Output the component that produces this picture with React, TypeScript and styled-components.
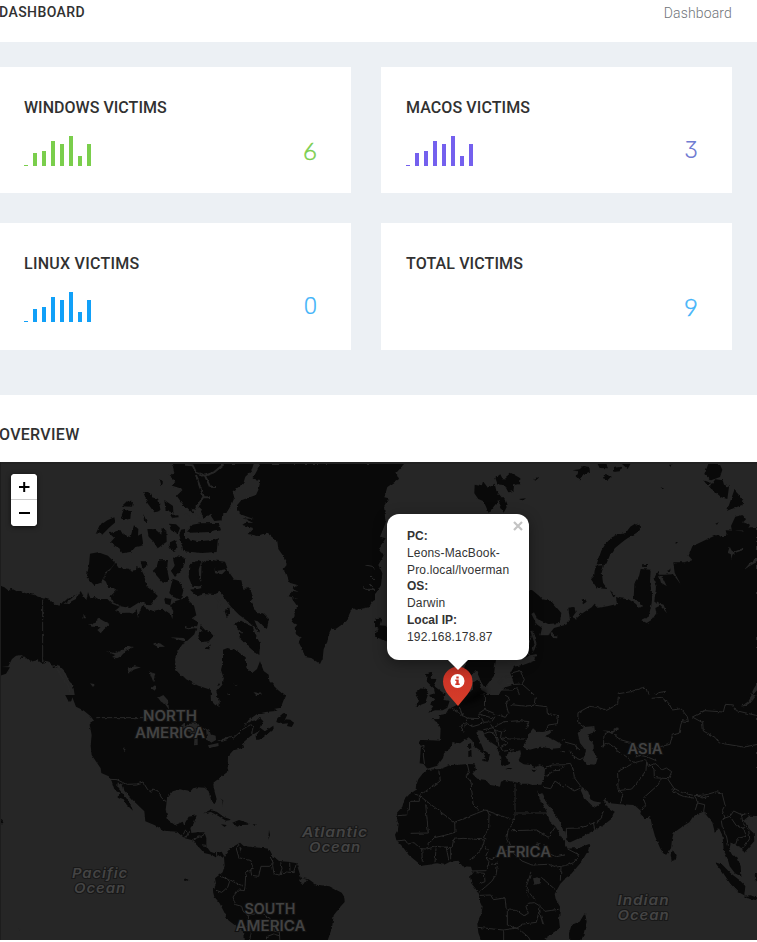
import React from "react";
import styled, { createGlobalStyle } from "styled-components";

const GlobalStyle = createGlobalStyle`
  * { box-sizing: border-box; }
  body { margin: 0; background: #fff; color: #313131; font-family: Roboto, sans-serif; overflow: hidden; }
`;

const Page = styled.div`
  width: 757px;
  height: 942px;
  display: flex;
  flex-direction: column;
  overflow: hidden;
`;

const TopBar = styled.header`
  height: 42px;
  flex: none;
  display: flex;
  justify-content: space-between;
  padding: 3px 25px 0 0;
`;

const PageTitle = styled.h4`
  margin: 0 0 0 -1px;
  font: 500 14px/18px Roboto, sans-serif;
  letter-spacing: 0.43px;
`;

const Breadcrumb = styled.span`
  font: 300 14px/20px Roboto, sans-serif;
  letter-spacing: 0.15px;
  color: #6f7479;
`;

const Stats = styled.section`
  height: 353px;
  flex: none;
  background: #ecf0f4;
  padding: 25px 25px 0 0;
  display: grid;
  grid-template-columns: 351px 351px;
  grid-template-rows: 126px 127px;
  gap: 30px;
`;

const Card = styled.article`
  background: #fff;
  padding: 31px 34px 0 24px;
  &:nth-child(even) { padding-left: 25px; }
`;

const CardTitle = styled.h3<{ $spacing: number }>`
  margin: 0;
  font: 500 16px/20px Roboto, sans-serif;
  letter-spacing: ${(p) => p.$spacing}px;
  white-space: nowrap;
`;

const CardBody = styled.div`
  height: 30px;
  margin-top: 18px;
  display: flex;
  justify-content: space-between;
`;

const Spark = styled.div<{ $color: string }>`
  display: flex;
  align-items: flex-end;
  gap: 5px;
  color: ${(p) => p.$color};
`;

const Bar = styled.i<{ $h: number }>`
  width: 4px;
  height: ${(p) => p.$h}px;
  background: currentColor;
`;

const Value = styled.span<{ $color: string; $font: string; $size: number; $weight: number }>`
  font: 300 ${(p) => p.$size}px/29px ${(p) => p.$font}, sans-serif;
  font-feature-settings: "cv09" 1;
  color: ${(p) => p.$color};
  -webkit-text-stroke: ${(p) => p.$weight}px ${(p) => p.$color};
`;

const Overview = styled.section`
  flex: 1;
  display: flex;
  flex-direction: column;
`;

const OverviewTitle = styled.h3`
  height: 67px;
  margin: 0 0 0 -1px;
  padding-top: 30px;
  font: 500 16px/20px Roboto, sans-serif;
  letter-spacing: 0.3px;
`;

const MapFrame = styled.div`
  position: relative;
  height: 478px;
  background: #262626;
`;

const MapArt = styled.svg`
  display: block;
`;

const ZoomBox = styled.div`
  position: absolute;
  left: 11px;
  top: 12px;
  width: 26px;
  height: 52px;
  border-radius: 4px;
  background: #fff;
  box-shadow: 0 1px 5px rgba(0, 0, 0, 0.65);
  overflow: hidden;
`;

const ZoomButton = styled.button`
  display: flex;
  align-items: center;
  justify-content: center;
  width: 26px;
  height: 26px;
  padding: 0;
  border: 0;
  background: #fff;
  &:first-child { border-bottom: 1px solid #ccc; }
`;

const Popup = styled.div`
  position: absolute;
  left: 387px;
  top: 52px;
  width: 142px;
  height: 146px;
  padding: 14px 15px 0 20px;
  border-radius: 12px;
  background: #fff;
  box-shadow: 0 3px 14px rgba(0, 0, 0, 0.4);
  color: #333;
  font: 12px/16.8px "Liberation Sans", Arial, sans-serif;
  letter-spacing: 0.16px;
  b { letter-spacing: 0; }
`;

const Tip = styled.i`
  position: absolute;
  left: 61px;
  top: 146px;
  border: 10px solid transparent;
  border-top-color: #fff;
  border-bottom: 0;
`;

const Close = styled.svg`
  position: absolute;
  left: 126px;
  top: 7px;
`;

const Pin = styled.svg`
  position: absolute;
  left: 438px;
  top: 202px;
`;

const WATER = "#262626";

type Tile = { x: number; y: number; w: number; h: number; vx?: number; land: string; water?: string; lines?: string; lakes?: string };

const tiles: Tile[] = [
  {
    x: 0, y: 455, w: 185, h: 240,
    land: `M-5,392L12,396L28,409L36,401L50,409L62,408L75,414L100,419L128,429L150,435L162,446L178,452L192,437L205,431L228,418L212,433L190,446L205,446L216,438L228,432L242,408L252,427L259,436L264,412L271,430L284,426L295,432L322,432L336,446L360,455L345,467L362,474L388,473L400,476L410,462L414,490L419,470L427,450L445,464L460,468L488,461L512,478L517,492L520,468L510,452L527,438L570,425V560L552,562L537,582L525,612L528,645L545,664L570,675V725H225L219,690L207,678L194,648L177,631L160,640L148,622L129,626L112,616L92,620L72,604L58,614L67,600L48,602L36,612L25,634L5,636L30,637L18,656L-5,664Z
      M270,296L294,292L324,302L345,324L333,340L318,350L303,383L282,390L260,367L267,330Z
      M346,324L356,339L386,341L396,350L408,348L409,333L422,340L433,363L440,395L468,414L473,424L450,451L420,440L390,459L362,454L336,440L332,423L350,405L341,399L325,399L318,380L309,373L317,357L330,346Z
      M422,319L438,319L439,334L428,343Z M475,316L504,315L501,342L508,376L490,385L458,348L470,336Z M519,312L530,304L560,309L547,343L525,366L513,348L524,332Z
      M518,371L536,378L550,406L543,434L520,426L508,414Z M492,428L514,432L511,451L496,446Z
      M286,240L298,212L322,196L343,187L346,202L327,218L305,241L298,232Z
      M330,264L343,249L328,235L361,225L368,237L391,247L402,211L415,222L414,242L425,236L430,271L406,276L394,290L367,295L358,280Z
      M365,154L382,137L399,142L396,155Z M364,184L371,164L393,169L391,191L374,195Z M430,111L448,111L456,127L475,133L482,168L463,172L442,144Z M493,135L519,153L520,173L497,166Z
      M478,71L489,83L484,94Z M430,178L441,201L432,200Z M511,180L534,178L536,187L516,188Z
      M516,27H570V155L556,158L530,122L550,103L512,91L528,80L509,63L522,50Z
      M442,222L465,223L484,239L485,219L499,227L500,260L473,280L461,260L446,245Z M507,206L528,208L540,219L533,237L512,225Z M510,262L525,255L533,280L519,288L509,278Z M543,224L570,220V292L550,287L538,240Z`,
    lakes: "M263,510L287,503L294,488L312,499L329,507L311,524L302,535L292,525L302,517L280,515Z M317,588L345,594L371,583L382,572L402,576L377,588L363,604L351,610L336,606L346,600Z M383,641L403,634L423,637L401,644L386,656Z M459,568L480,565L495,575L474,576Z M448,650L466,656L460,681Z M250,476L259,490L251,490Z M511,547L550,549L570,562L547,557Z M270,685L286,688L279,696Z M453,700L466,690L465,707Z",
    lines: "M128,431V618L148,622L154,634L173,631L194,656L208,683L220,692 M172,641L185,665L204,690L210,712 M168,635L178,656L190,671",
  },
  {
    x: 185, y: 455, w: 190, h: 240, vx: 15,
    land: `M-5,27H221L214,48L196,65L190,85L169,101L158,109L163,129L155,148L139,174L127,174L125,196L103,198L89,177L72,190L62,176L68,166L51,150L38,175L22,158L-5,163Z
      M242,27H605V425L579,438L566,457L526,465L517,458L507,480L500,498L485,509L468,521L455,522L445,542L442,560L431,582L428,610L420,627L394,609L375,606L370,588L356,562L362,548L348,538L344,518L352,509L335,500L344,483L343,471L352,454L335,430L356,432L326,424L337,407L356,411L338,401L352,390L329,383L319,354L308,345L320,330L312,306L295,282L292,259L260,233L231,243L203,237L220,219L187,210L196,203L220,204L191,190L222,193L188,180L171,166L171,151L184,136L228,120L235,105L242,75L218,71Z
      M20,228L38,209L61,205L116,204L123,226L91,231L28,233Z M-5,248L27,253L54,259L103,255L114,249L110,291L65,294L15,289L3,278Z
      M28,330L54,315L64,319L56,344L58,372L68,389L58,394L36,392L26,367Z M65,324L76,317L102,319L105,355L126,358L141,343L163,374L184,376L190,401L211,400L219,430L211,439L231,475L249,475L267,492L260,522L250,513L238,500L223,496L239,533L205,500L177,479L153,455L131,427L120,410L100,420L72,417L52,424L30,404L67,400L63,370Z
      M100,316L135,320L143,341L121,346L106,349Z M161,510L183,497L201,506L219,518L227,541L240,565L238,600L217,585L197,567L178,549L186,532Z M-5,435L19,426L27,438L42,452L49,481L35,490L55,502L43,538L22,557L-5,563Z
      M55,543L62,511L75,525L103,541L86,559L62,562Z M76,581L93,568L87,583Z M134,468L148,457L151,476L140,486Z M179,530L194,547L181,547Z
      M129,584L143,579L171,589L197,607L199,638L216,655L231,642L240,619L251,648L266,659L268,679L293,704L318,725H114L109,710L127,689L132,672L123,645L129,620Z M-5,666L17,672L55,692L91,704L98,725H-5Z M117,684L120,690L112,693Z`,
    lakes: "M130,724L150,716L155,724Z M220,711L234,715L249,716L232,724Z M158,684L172,689L175,694Z M3,185L20,174L30,190L23,200Z M116,435L122,448L111,463Z",
    lines: "M605,365L577,334L556,330M602,391L570,360M604,403L557,403L549,398M586,409L568,387",
    water: "M0,28L38,31L48,52L74,62L102,52L131,28M48,60L60,96L71,124L58,145L51,160M76,64L90,95L108,96M68,127L90,127M37,160L50,181L65,194M5,513L26,520L45,516L65,528M105,421L123,447",
  },
  {
    x: 375, y: 455, w: 190, h: 240, vx: 15,
    land: `M-5,27H102L79,53L87,72L52,96L43,127L56,130L42,154L47,203L30,245L47,250L27,279L41,301L25,330L37,354L33,390L24,406L0,436Z
      M-3,482L19,492L34,491L29,511L52,513L54,560L24,550L9,534L27,522L-4,507Z M314,89L335,94L339,79L354,99L374,86L379,107L394,126L356,174L341,139L325,132L313,115Z
      M376,69L391,58L399,74L422,53L451,70L450,87L432,91L431,107L415,112L404,91L383,88Z M389,127L404,127L413,151L401,173L388,151Z M447,132L468,130L458,137Z M490,72L509,66L496,77Z
      M460,414L485,404L507,422L517,433L543,438L574,474L569,504L535,507L503,493L492,472L484,477L500,508L516,519L511,541L535,541L552,519L590,509V720H385L400,699L434,688L421,655L432,635L466,628L497,616L486,600L446,614L430,604L449,559L466,523L444,485L432,541L405,594L379,608L374,639L372,662L344,698L334,682L318,644L300,665L279,660L290,602L356,514L407,448Z
      M309,678L328,674L334,705L354,716L328,720H286L300,712L309,701Z M168,658L190,653L180,671L199,672L193,694L228,720H178L195,715L191,699L171,680Z M137,713L157,696L175,703L170,720H140Z`,
    water: "M420,663L400,669L383,685M483,525L497,566L487,592M475,605L500,600M542,533L551,546L562,547",
    lines: "M389,705L427,705L442,698L448,720M407,684L435,688L456,687L463,674L450,647L424,654M456,687L493,720M480,615L472,580L484,542",
  },
  {
    x: 565, y: 455, w: 192, h: 240, vx: 15,
    land: `M-5,502L8,496L17,511L30,495L25,458L43,456L48,471L38,485L45,494L65,476L95,457L104,446L115,458L142,454L171,447L168,426L180,430L205,433L228,447L237,460L247,454L221,430L223,389L236,368L242,342L272,344L270,381L277,421L275,444L266,485L244,496L260,504L276,494L289,475L286,459L300,452L315,468L320,474L311,449L283,440L288,399L281,369L293,347L303,383L320,393L309,370L294,359L314,359L339,358L353,376L363,389L344,353L340,322L372,322L397,315L386,302L397,274L430,258L461,244L475,239L486,248L500,238L497,226L548,229L570,217L600,217V725H-5Z
      M211,215L225,206L239,212L240,221L229,234L200,251L186,262L165,279L151,298L139,326L110,328L124,287L137,266L156,247L173,239L197,234Z
      M107,332L132,331L125,352L129,383L142,402L111,399L93,373L102,363Z M150,406L166,420L161,429Z M64,435L74,430L80,440L69,448Z
      M445,27H479L487,44L480,66L453,76L433,57Z M430,76L453,83L445,94Z M449,97L466,73L488,76L492,89L507,95L502,132L484,127Z M523,105L537,120L550,135L548,149L501,167Z M513,213L526,185L548,180L558,193L549,202L570,209L562,226L516,227Z
      M37,46L59,43L69,33L88,36L90,50L71,57L59,73L50,64L56,49Z M113,27H138L144,40L119,39Z M160,51L164,38L184,35L179,49Z M186,27H211L203,42Z M129,70L132,60L155,63L144,74Z M98,60L106,66M327,29H338L331,35Z M302,97L313,101L306,102Z M250,327L262,327L260,336L249,335Z M322,342L333,345L324,351Z M466,206L476,202L471,209Z M346,264L354,263L350,269Z`,
    lakes: "M509,275L518,292L548,280L550,285L527,293L517,299L515,313L512,297L503,294Z M552,345L570,323L596,307V318L568,334Z M566,735L581,701L600,672V695Z",
    lines: "M172,725L176,716L213,710L247,698L259,702L264,719L281,725L296,713L317,709L308,718L320,735",
  },
  {
    x: 0, y: 695, w: 185, h: 247,
    land: `M193,-5L207,22L214,18L217,7L228,35L250,46L272,64L282,77L269,88L275,120L272,152L275,180L302,220L304,234L326,244L335,258L344,286L358,293L356,307L371,313L380,329L399,347L391,326L374,304L352,276L353,262L369,269L373,287L401,318L433,349L436,379L463,390L494,407L531,410L549,426L570,434V390H552L548,380L525,391L504,374L497,344L501,311L518,289L540,283L570,290V-5Z M2,374L9,379L4,386Z M54,701L61,705L59,708Z M552,551L563,554L553,558Z`,
    lakes: "M474,8L490,0L504,16L507,44L495,27L483,20Z M535,101L554,82L570,81V95L548,102Z M367,155L377,164L373,168Z",
    lines: "M286,68H430L458,76M330,253L351,254L379,268L410,267L429,261L443,284L454,292L458,282L473,287L485,309L499,320M550,418L560,398L570,393",
  },
  {
    x: 185, y: 695, w: 190, h: 247, vx: 15,
    land: `M-5,-5H320L311,15L302,38L281,42L293,47L257,51L231,57L206,75L192,94L213,79L228,76L240,69L250,79L242,100L255,109L280,92L281,101L245,131L229,135L227,123L241,105L211,124L188,144L192,158L160,166L144,184L143,218L145,229L100,263L101,280L110,313L104,324L93,317L86,289L74,278L53,277L39,280L32,288L-5,282Z
      M289,81L292,70L310,54L320,63L315,73L331,74L342,84L335,96L321,93L324,85L304,87Z
      M-5,390L15,384L26,365L50,361L40,388L31,399L34,412L73,412L79,429L79,454L91,470L104,475L125,470L132,483L128,488L118,479L107,487L95,479L72,474L60,460L48,448L38,436L9,428L-5,423Z
      M70,355L89,346L110,350L133,367L156,374L138,377L115,363L93,351Z M157,383L177,375L202,383L205,389L180,390L172,395Z M123,388L140,390L134,396Z M218,388L230,388L225,393Z
      M104,580L108,565L105,550L128,532L134,512L132,486L144,467L157,457L180,443L191,453L219,457L249,459L267,461L278,482L297,498L329,501L350,505L354,520L363,549L386,553L409,569L448,574L485,593L493,606L494,621L481,635L461,661L456,698L440,745H192L189,706L173,697L145,676L118,623L103,605L99,590Z M121,309L130,317L126,333L128,318Z M267,405L270,420L265,434Z M12,550L26,554L15,558Z`,
    lakes: "M92,0L108,-5L119,16L119,35L105,30L93,17Z M6,101L30,83L52,82L59,93L47,101L58,113L53,122L53,150L42,151L44,120L28,111Z M78,106L87,102L92,118L107,122L108,135L92,144L82,136Z M84,151L115,144L116,153L88,160Z M120,135L138,129L145,134L125,141Z M178,454L185,460L181,471Z M357,555L365,548L381,555L374,566L363,566Z M144,183L154,180L151,200Z",
    lines: "M60,96L77,105M113,135L132,132L152,124L160,129L179,112L188,103L213,88L219,97L215,119L231,121M-5,405L9,398L22,412M27,408L17,429M34,412L70,408M37,434L58,426L75,415M62,449L78,451M109,473L111,486M177,447L169,462L177,488L198,494L213,497L217,516L212,525L215,541L236,544L243,514L269,514L279,502L269,483M279,502L278,512L282,536L297,540L322,531L340,533L349,507M302,502L306,521L300,536M329,503L330,527M215,525L199,531L197,544L195,575L193,587L175,585L159,606L167,629L185,634L191,654L205,662L206,692L192,702M120,543L134,549L149,559L143,577L125,592L108,586M149,554L162,561L189,573M202,661L240,654L270,670L282,685L283,709L298,711L300,745M206,692L213,714L207,745M258,740L260,725L281,717L300,723",
  },
  {
    x: 375, y: 695, w: 190, h: 247, vx: 15,
    land: `M137,0L150,-5H175L165,25L137,35L147,17Z M176,0L228,-5L220,15L239,17L232,38L218,46L195,46L175,53L190,34L180,28L196,13Z
      M280,-5L276,16L259,31L236,42L227,57L210,60L208,72L184,73L205,83L212,101L210,137L183,136L151,135L146,143L153,153L149,205L161,207L172,221L202,212L219,189L222,175L246,155L247,141L270,145L296,127L307,137L313,154L341,174L347,194L333,197L354,200L360,178L341,165L330,138L319,117L325,106L340,108L344,124L359,139L383,155L384,170L394,187L393,207L405,213L418,205L406,184L416,174L431,170L451,166L453,176L446,198L461,208L479,209L495,217L509,211L526,218L522,249L514,269L487,270L475,266L454,266L436,262L407,255L393,260L390,275L361,270L347,255L322,251L307,236L318,224L314,208L291,207L270,209L242,210L211,222L176,224L159,235L145,253L138,273L137,286L119,297L103,314L97,335L83,351L79,365L86,385L84,403L75,419L79,435L98,455L116,480L138,498L155,512L177,509L202,505L222,509L240,500L265,497L278,514L303,515L308,532L300,543L304,565L324,590L330,606L330,618L338,635L333,660L322,686L325,713L337,745H535L523,731L570,699L567,674L570,635L557,612L554,597L571,566L600,537V-5Z
      M294,148L303,144L304,160L295,161Z M295,167L304,165L305,183L295,187Z M406,219L427,219L422,223Z M482,225L500,223L493,231Z`,
    lakes: "M461,149L469,138L475,119L489,100L501,110L518,111L551,104L538,117L525,123L553,135L575,148L570,159L547,161L511,155L480,164L463,158Z M489,550L510,546L513,564L494,570Z M500,284L508,298L517,294L526,317L543,338L569,379L583,414L605,443L600,452L576,428L557,395L539,379L529,347L512,318Z M509,632L513,660L524,692L516,684L506,648Z M470,582L473,613L468,588Z M494,448L509,443L504,459Z",
    lines: `M246,40L265,52L276,61L292,69L287,85L272,92L282,113M268,33L278,64M292,69L325,71L327,55L344,43L343,0M344,43L379,58L406,67L415,53L409,30L417,8L405,0M276,99L292,86L307,95L328,89L341,82L334,67M341,82L365,80L375,65M340,104L365,99L387,88L405,80L422,79L447,77L477,80L468,102M422,29L464,33L492,31L496,7M496,31L530,35L532,55L565,62L562,86L535,90L529,107M362,88L372,104L395,111L408,99M372,104L382,125L387,154M395,111L391,128L418,132L466,132M391,128L412,143L391,155L398,169L432,164M343,116L357,111L372,114L380,137M325,55L342,62L371,70M150,155L162,151L160,180L163,204M575,135L600,138M575,169L600,173L590,183L600,199M525,218L547,210L600,209M527,245L551,227L570,226L580,212M520,277L542,281L555,258L600,289M206,223L211,258L148,302L253,382L345,345L431,376L435,372V266M351,344L357,358L356,400L340,428L349,432M292,208L297,229L288,243L303,261L309,327L325,344M438,354H535M167,328L175,414L119,415M83,362L110,360L111,345L118,345L119,319H148V302L134,297M254,382L255,412L224,421L193,428L175,447L170,460M80,438L105,435L114,447L132,443L152,461L170,462L202,454L246,459L251,433L279,430L344,435L335,460L310,490L299,494M155,461L157,500M198,460L195,502M228,454L236,493M242,459V493M346,454L354,468L346,486L357,500L348,527L304,528M346,486L366,494L390,475L417,463L456,498L486,510L535,508L560,516L584,512L600,512M431,376L414,407L410,432L424,462M424,407L500,405L535,427L555,397M522,448L536,476L560,485L582,480L600,468M363,508L383,504L378,540L365,559L347,575L327,592M320,533L343,535L345,560L327,567M330,601L362,600L370,614L405,609L409,645L439,646L462,662L475,655L468,635L475,625L493,623L508,632L525,649L566,643M483,533L470,571L475,590L497,617M514,547L556,584M573,516L571,557M324,697L370,702L400,705L441,699L461,687L499,682L505,657M412,646V690L448,703L475,726L486,745M401,706V740`,
  },
  {
    x: 565, y: 695, w: 192, h: 247, vx: 15,
    land: `M-5,-5H600V363L568,362L552,376L565,400L581,415L583,438L553,473L545,459L525,450L512,442L508,462L515,478L532,487L542,514L544,545L525,535L509,514L503,492L491,465L488,422L477,400L464,410L457,382L443,365L431,350L411,357L399,365L388,382L371,392L341,413L336,434L333,460L318,480L302,463L285,424L277,395L270,362L256,372L241,356L243,348L223,330L180,328L146,324L137,310L123,323L102,319L91,313L85,290L67,276L62,286L72,308L95,331L107,336L131,319L140,335L164,350L155,371L128,392L69,424L31,442L20,440L17,410L4,389L-5,370Z
      M-5,440L13,448L20,461L53,459L88,447L85,466L64,501L34,536L-5,565Z M75,654L80,680L70,720L61,745H28L27,715L35,689L59,680Z M337,463L350,484L347,494L335,498L332,480Z M464,501L487,509L511,534L538,555L556,573L553,601L536,592L511,566L489,533Z M552,602L572,601L596,610V617L557,609Z M584,538L600,535V570L586,554Z`,
    lakes: "M53,114L73,96L103,93L105,111L82,119L101,150L101,170L113,190L107,209L81,208L70,191L78,167L60,144Z M543,35L565,19L577,0H590L575,20L558,32Z M130,106L155,116L174,103L171,97L153,109Z M576,375L600,365V380L583,390Z M-5,142L5,146L8,158L-5,163Z",
    lines: `M175,5L173,28L140,46L113,37L89,34L54,53L53,82L73,98M275,10L304,7L326,24L337,45L363,41L382,65L385,80L365,77L357,115L337,120L330,148L280,160L240,165L213,143L181,134L148,109L132,119L130,157M397,66L428,83L430,108L465,127L478,144L550,156L600,147M397,66L435,47L490,51L496,28L521,30L529,47L600,64M0,137L47,150L52,162M28,167L40,186L60,194L70,188M45,152L60,165M0,209L31,205L40,223L43,248L65,277M0,258L42,288L61,280M21,455L19,400L61,399L107,382L123,371L130,348M100,382L105,408M120,156L146,145L191,179L223,203L173,230L174,284L189,296L181,325M223,203L260,194L258,226L241,251L215,282L174,287M260,194L265,214L285,205L308,224L319,219L335,230L326,251L283,248L282,222L267,207M227,186L240,181L260,185L289,197M304,251L294,270L250,309L257,329L246,346M322,250L342,280L367,293L403,302L435,300L470,290L486,295L495,330L487,346M338,280L342,292L370,304L402,310M403,302L414,320L405,347M413,324L434,329L431,350L441,357M411,300L426,309L447,304M487,346L495,369L484,378L487,396L500,426L505,452M489,371L510,364L529,392L551,400L559,424L533,430L527,448M510,364L521,348L544,359L565,355M544,359L549,385L566,406L569,431L550,460M23,462L58,480L41,503L0,517`,
  },
];

const MapLabel = styled.text<{ $ocean?: boolean }>`
  font-family: Inter, sans-serif;
  font-size: ${(p) => (p.$ocean ? 13.4 : 13.8)}px;
  font-weight: 600;
  font-style: ${(p) => (p.$ocean ? "italic" : "normal")};
  letter-spacing: ${(p) => (p.$ocean ? 0.8 : 0)}px;
  fill: ${(p) => (p.$ocean ? "#444" : "#424242")};
  stroke: ${(p) => (p.$ocean ? "#181818" : "#111")};
  stroke-width: 2px;
  paint-order: stroke;
  text-anchor: middle;
`;

const labels: { t: string; x: number; y: number; w: number; ocean?: boolean }[] = [
  { t: "NORTH", x: 170, y: 721, w: 54 },
  { t: "AMERICA", x: 170, y: 738, w: 70 },
  { t: "SOUTH", x: 270, y: 914, w: 51 },
  { t: "AMERICA", x: 270.5, y: 931, w: 70 },
  { t: "AFRICA", x: 523.5, y: 857, w: 55 },
  { t: "ASIA", x: 645, y: 753.5, w: 35 },
  { t: "Pacific", x: 100, y: 877.5, w: 56, ocean: true },
  { t: "Ocean", x: 100, y: 892.5, w: 52, ocean: true },
  { t: "Atlantic", x: 335, y: 836.5, w: 66, ocean: true },
  { t: "Ocean", x: 335, y: 851.5, w: 52, ocean: true },
  { t: "Indian", x: 643.5, y: 904.5, w: 52, ocean: true },
  { t: "Ocean", x: 643.5, y: 919.5, w: 52, ocean: true },
];

const WorldMap = () => (
  <MapArt width={757} height={478} viewBox="0 462 757 478">
    <defs>
      <filter id="coast" filterUnits="userSpaceOnUse" x={0} y={455} width={757} height={487} colorInterpolationFilters="sRGB">
        <feTurbulence type="fractalNoise" baseFrequency={0.24} numOctaves={2} seed={4} />
        <feDisplacementMap in="SourceGraphic" scale={3} xChannelSelector="R" yChannelSelector="G" />
      </filter>
    </defs>
    <g filter="url(#coast)">
      <rect y={455} width={757} height={487} fill={WATER} />
      {tiles.map((t) => (
        <svg key={`${t.x}-${t.y}`} x={t.x} y={t.y} width={t.w} height={t.h} viewBox={`${t.vx ?? 0} 0 ${t.w * 3} ${t.h * 3}`}>
          <path d={t.land} fill="#090909" />
          {t.lakes && <path d={t.lakes} fill={WATER} />}
          {t.water && <path d={t.water} fill="none" stroke={WATER} strokeWidth={6} />}
          {t.lines && <path d={t.lines} fill="none" stroke="#292929" strokeWidth={3} />}
        </svg>
      ))}
    </g>
    <rect y={462} width={757} height={2} fill="#222" />
    <rect y={462} width={1} height={478} fill="#1d1d1d" />
    {labels.map((l) => (
      <MapLabel key={`${l.t}${l.x}${l.y}`} x={l.x} y={l.y} textLength={l.w} lengthAdjust="spacingAndGlyphs" $ocean={l.ocean}>{l.t}</MapLabel>
    ))}
  </MapArt>
);

const bars = [1, 13, 15, 25, 22, 30, 10, 22];

const stats = [
  { title: "WINDOWS VICTIMS", color: "#7ace4c", num: "#7ace4c", value: 6, font: "Lato", size: 24, weight: 0.5, ls: 0.03 },
  { title: "MACOS VICTIMS", color: "#7460ee", num: "#707cd2", value: 3, font: "Inter", size: 23, weight: 0, ls: 0.1 },
  { title: "LINUX VICTIMS", color: "#11a0f8", num: "#41b3f9", value: 0, font: "Roboto", size: 24, weight: 0.2, ls: 0.25 },
  { title: "TOTAL VICTIMS", color: "", num: "#41b3f9", value: 9, font: "Lato", size: 24, weight: 0.5, ls: 0.12 },
];

export default function App() {
  return (
    <Page>
      <GlobalStyle />
      <TopBar>
        <PageTitle>DASHBOARD</PageTitle>
        <Breadcrumb>Dashboard</Breadcrumb>
      </TopBar>
      <Stats>
        {stats.map((s) => (
          <Card key={s.title}>
            <CardTitle $spacing={s.ls}>{s.title}</CardTitle>
            <CardBody>
              <Spark $color={s.color}>{s.color && bars.map((h, i) => <Bar key={i} $h={h} />)}</Spark>
              <Value $color={s.num} $font={s.font} $size={s.size} $weight={s.weight}>{s.value}</Value>
            </CardBody>
          </Card>
        ))}
      </Stats>
      <Overview>
        <OverviewTitle>OVERVIEW</OverviewTitle>
        <MapFrame>
          <WorldMap />
          <ZoomBox>
            <ZoomButton aria-label="Zoom in">
              <svg width={26} height={25} viewBox="0 0 26 25"><path d="M8 13H18.500M13.200 8V18" stroke="#000" strokeWidth={2} /></svg>
            </ZoomButton>
            <ZoomButton aria-label="Zoom out">
              <svg width={26} height={26} viewBox="0 0 26 26"><path d="M8 13H19" stroke="#000" strokeWidth={2} /></svg>
            </ZoomButton>
          </ZoomBox>
          <Pin width={60} height={46} viewBox="0 0 60 46">
            <defs>
              <linearGradient id="pin" x1="0" y1="0" x2="0" y2="1">
                <stop offset="0" stopColor="#b92f22" />
                <stop offset="0.35" stopColor="#cf3527" />
                <stop offset="1" stopColor="#d63e2a" />
              </linearGradient>
              <filter id="soft" x="-30%" y="-50%" width="160%" height="200%"><feGaussianBlur stdDeviation="2" /></filter>
            </defs>
            <path d="M20 42L34 30Q46 22 49 27Q48 34 34 39Z" fill="#000" opacity="0.6" filter="url(#soft)" />
            <path d="M5 17.500A14.700 14.700 0 0 1 34.500 17.500Q34.500 24 29 31L20 42L10.500 31Q5 24 5 17.500Z" fill="url(#pin)" />
            <circle cx="19.500" cy="17" r="7" fill="#fff" />
            <path d="M18.300 12.500H20.700V14.500H18.300ZM17.300 15.500H20.700V19.500H21.700V21H17.300V19.500H18.300V17H17.300Z" fill="#cf3527" />
          </Pin>
          <Popup>
            <b>PC:</b><br />Leons-MacBook-<br />Pro.local/lvoerman<br />
            <b>OS:</b><br />Darwin<br />
            <b>Local IP:</b><br />192.168.178.87
            <Close width={10} height={10} viewBox="0 0 10 10"><path d="M1 1L9 9M9 1L1 9" stroke="#c3c3c3" strokeWidth={2.2} /></Close>
            <Tip />
          </Popup>
        </MapFrame>
      </Overview>
    </Page>
  );
}
